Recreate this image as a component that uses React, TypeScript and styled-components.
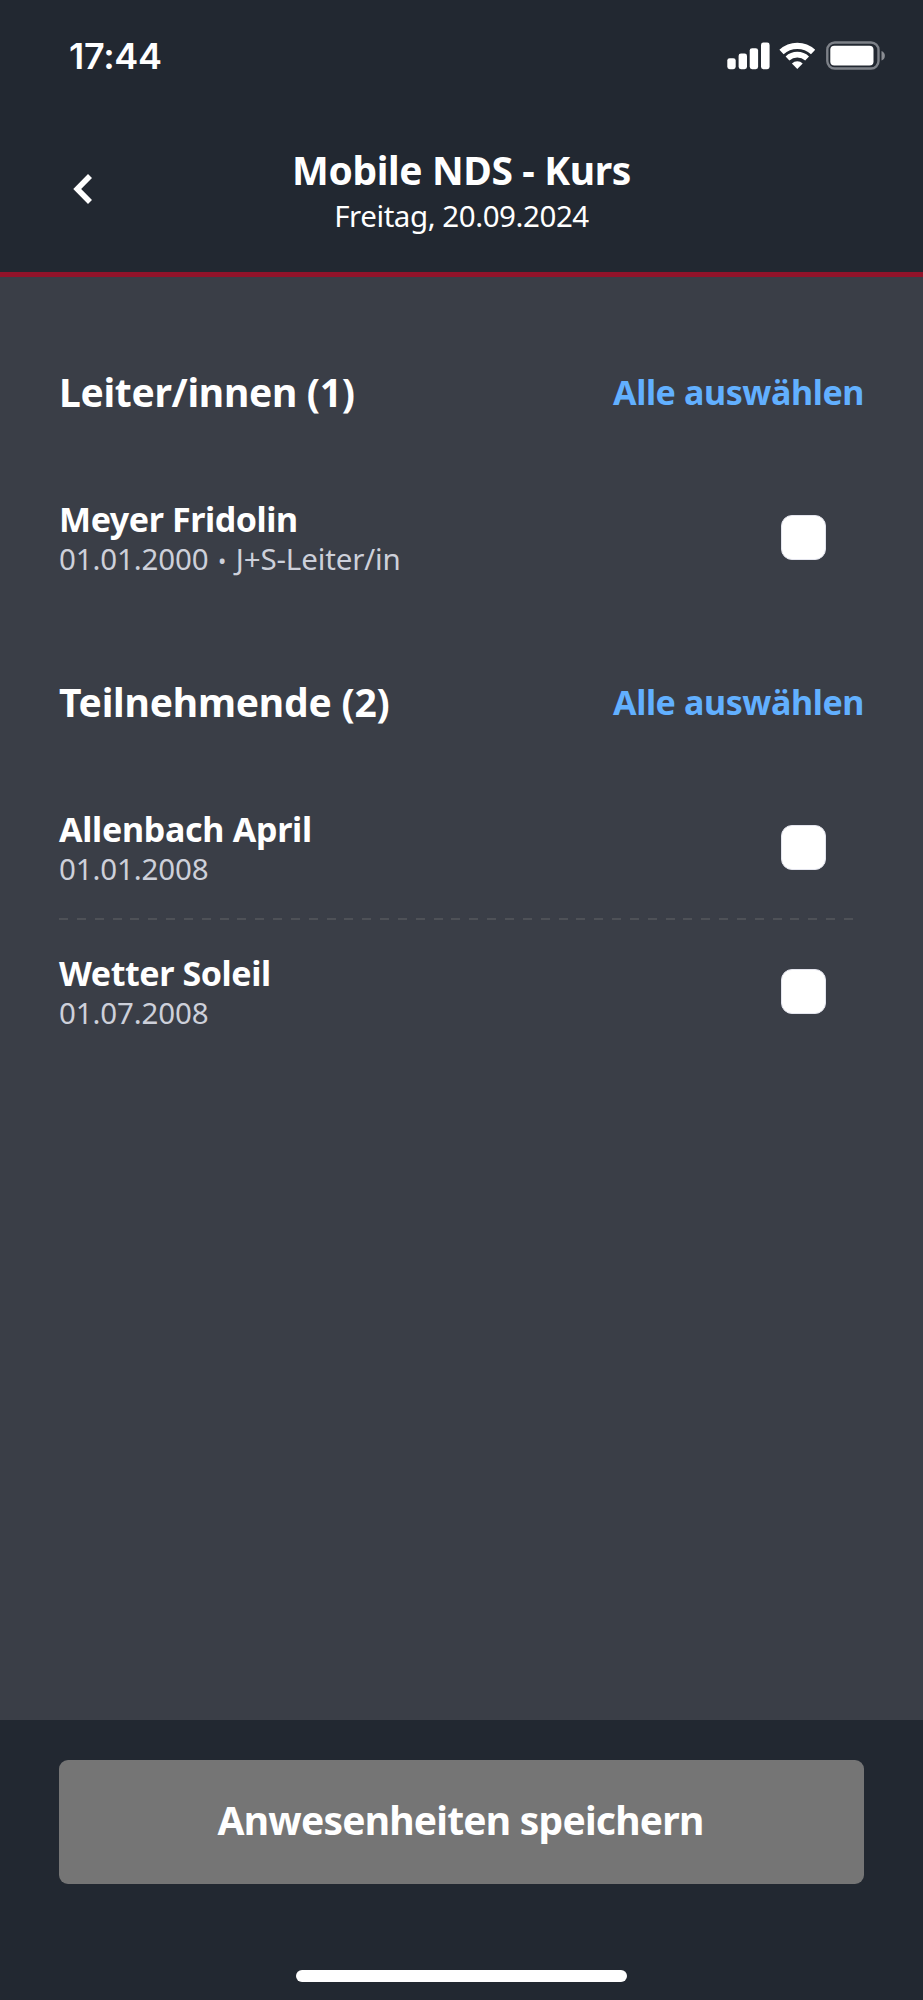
import React, { useState } from 'react';
import styled, { createGlobalStyle } from 'styled-components';

const GlobalStyle = createGlobalStyle`
  *, *::before, *::after { box-sizing: border-box; }
  body { margin: 0; background: #222831; }
  button { border: 0; padding: 0; margin: 0; background: none; font: inherit; color: inherit; cursor: pointer; }
  h1, h2, p, ul { margin: 0; padding: 0; }
  ul { list-style: none; }
`;

const Screen = styled.div`
  display: flex;
  flex-direction: column;
  width: 923px;
  height: 2000px;
  overflow: hidden;
  background: #3a3e47;
  color: #fff;
  font-family: 'Noto Sans', 'Open Sans', sans-serif;
  white-space: nowrap;
`;

const StatusBar = styled.div`
  display: flex;
  align-items: center;
  justify-content: space-between;
  height: 111px;
  padding: 0 37px 0 69px;
  background: #222831;
`;

const Clock = styled.span`
  font-family: Inter, sans-serif;
  font-size: 36px;
  font-weight: 600;
  line-height: 44px;
  letter-spacing: -0.3px;
`;

const StatusIcons = styled.div`
  display: flex;
  align-items: center;
  gap: 9px;

  svg { display: block; }
`;

const NavBar = styled.header`
  display: grid;
  grid-template-columns: 130px 1fr 130px;
  align-items: center;
  height: 166px;
  padding: 2px 0 6px;
  background: #222831;
  border-bottom: 5px solid #92132a;
`;

const BackButton = styled.button`
  justify-self: start;
  display: flex;
  margin: 0 0 2px 73px;
`;

const TitleBlock = styled.div`
  text-align: center;
`;

const Title = styled.h1`
  font-size: 39px;
  font-weight: 700;
  line-height: 50px;
  letter-spacing: -0.38px;
`;

const Subtitle = styled.p`
  margin-top: 2px;
  font-size: 29.5px;
  line-height: 38px;
  letter-spacing: -0.44px;
`;

const Content = styled.main`
  flex: 1;
  display: flex;
  flex-direction: column;
  gap: 66px;
  padding: 88.5px 60px 0 59px;
`;

const Section = styled.section`
  display: flex;
  flex-direction: column;
  gap: 48px;
`;

const SectionHeader = styled.div`
  display: flex;
  align-items: center;
  justify-content: space-between;
  height: 52px;
`;

const SectionTitle = styled.h2<{ $tracking: number }>`
  font-size: 39px;
  font-weight: 700;
  line-height: 52px;
  letter-spacing: ${({ $tracking }) => $tracking}px;
`;

const SelectAll = styled.button`
  margin-right: -1px;
  color: #62b0ff;
  font-size: 34px;
  font-weight: 700;
  line-height: 52px;
  letter-spacing: -0.4px;
`;

const Row = styled.li`
  display: flex;
  align-items: center;
  justify-content: space-between;
  height: 144px;
  padding-right: 37px;

  &:not(:last-child) {
    background: repeating-linear-gradient(90deg, #4e5157 0 9px, transparent 9px 17.84px) 0 100% / 795px 2px no-repeat;
  }
`;

const PersonInfo = styled.div`
  padding-top: 2px;
`;

const Name = styled.p<{ $tracking: number }>`
  font-size: 34px;
  font-weight: 700;
  line-height: 40px;
  letter-spacing: ${({ $tracking }) => $tracking}px;
`;

const Detail = styled.p`
  margin-top: 1px;
  color: #cdd0da;
  font-size: 29.5px;
  font-weight: 400;
  line-height: 38px;
  letter-spacing: -0.13px;
`;

const Dot = styled.span`
  margin: 0 2px;
  font-size: 22px;
  line-height: 1;
  vertical-align: 1px;
`;

const Checkbox = styled.button<{ $checked: boolean }>`
  width: 45px;
  height: 45px;
  border: 1px solid #e4e5ee;
  border-radius: 11px;
  background: ${({ $checked }) => ($checked ? '#62b0ff' : '#fff')};
`;

const Footer = styled.footer`
  display: flex;
  flex-direction: column;
  align-items: center;
  justify-content: space-between;
  height: 280px;
  padding: 40px 59px 18px;
  background: #222831;
`;

const SaveButton = styled.button`
  width: 100%;
  height: 124px;
  padding: 0 2px 5px 0;
  border-radius: 9px;
  background: #757575;
  font-size: 39px;
  font-weight: 700;
  letter-spacing: -0.78px;
`;

const HomeIndicator = styled.div`
  width: 331px;
  height: 12px;
  border-radius: 6px;
  background: #fff;
`;

type Person = { name: string; birthday: string; role?: string; tracking: number };

const groups: { title: string; tracking: number; people: Person[] }[] = [
  {
    title: 'Leiter/innen (1)',
    tracking: -0.3,
    people: [{ name: 'Meyer Fridolin', birthday: '01.01.2000', role: 'J+S-Leiter/in', tracking: -0.42 }],
  },
  {
    title: 'Teilnehmende (2)',
    tracking: -0.2,
    people: [
      { name: 'Allenbach April', birthday: '01.01.2008', tracking: -0.28 },
      { name: 'Wetter Soleil', birthday: '01.07.2008', tracking: -0.42 },
    ],
  },
];

function SignalIcon() {
  return (
    <svg width="43" height="28" viewBox="0 0 43 28" fill="#fff">
      <rect x="0.3" y="16.2" width="8.4" height="11" rx="2.4" />
      <rect x="11.6" y="11.6" width="8.4" height="15.6" rx="2.4" />
      <rect x="22.7" y="6.2" width="8.4" height="21" rx="2.4" />
      <rect x="34" y="0.5" width="8.6" height="26.7" rx="2.4" />
    </svg>
  );
}

function WifiIcon() {
  return (
    <svg width="38" height="28" viewBox="-18.3 -27 38 28" fill="none" stroke="#fff">
      <path d="M-15.8 -17A23.2 23.2 0 0 1 15.8 -17" strokeWidth="6.2" />
      <path d="M-9.8 -10.5A14.4 14.4 0 0 1 9.8 -10.5" strokeWidth="5.6" />
      <path d="M0 0L-5.4 -5.6A8 8 0 0 1 5.4 -5.6Z" fill="#fff" stroke="none" />
    </svg>
  );
}

function BatteryIcon() {
  return (
    <svg width="60" height="29" viewBox="0 0 60 29">
      <rect x="1.3" y="1.5" width="51.2" height="26" rx="7.5" fill="none" stroke="#7d8188" strokeWidth="2.4" />
      <rect x="4.3" y="4.8" width="43.2" height="19.6" rx="4" fill="#fff" />
      <path d="M55.5 10V19.6C60 18 60 11.6 55.5 10Z" fill="#8a8d93" />
    </svg>
  );
}

function ChevronIcon() {
  return (
    <svg width="20" height="30" viewBox="0 0 20 30" fill="none" stroke="#fff" strokeWidth="5.6">
      <path d="M17 2L4.2 15L17 28" />
    </svg>
  );
}

export default function App() {
  const [present, setPresent] = useState<string[]>([]);
  const toggle = (name: string) =>
    setPresent((p) => (p.includes(name) ? p.filter((n) => n !== name) : [...p, name]));
  const selectAll = (people: Person[]) =>
    setPresent((p) => Array.from(new Set([...p, ...people.map((x) => x.name)])));

  return (
    <>
      <GlobalStyle />
      <Screen>
        <StatusBar>
          <Clock>17:44</Clock>
          <StatusIcons>
            <SignalIcon />
            <WifiIcon />
            <BatteryIcon />
          </StatusIcons>
        </StatusBar>
        <NavBar>
          <BackButton aria-label="Zurück">
            <ChevronIcon />
          </BackButton>
          <TitleBlock>
            <Title>Mobile NDS - Kurs</Title>
            <Subtitle>Freitag, 20.09.2024</Subtitle>
          </TitleBlock>
        </NavBar>
        <Content>
          {groups.map((group) => (
            <Section key={group.title}>
              <SectionHeader>
                <SectionTitle $tracking={group.tracking}>{group.title}</SectionTitle>
                <SelectAll onClick={() => selectAll(group.people)}>Alle auswählen</SelectAll>
              </SectionHeader>
              <ul>
                {group.people.map((person) => (
                  <Row key={person.name}>
                    <PersonInfo>
                      <Name $tracking={person.tracking}>{person.name}</Name>
                      <Detail>
                        {person.birthday}
                        {person.role && (
                          <>
                            {' '}
                            <Dot>•</Dot> {person.role}
                          </>
                        )}
                      </Detail>
                    </PersonInfo>
                    <Checkbox
                      role="checkbox"
                      aria-checked={present.includes(person.name)}
                      aria-label={person.name}
                      $checked={present.includes(person.name)}
                      onClick={() => toggle(person.name)}
                    />
                  </Row>
                ))}
              </ul>
            </Section>
          ))}
        </Content>
        <Footer>
          <SaveButton>Anwesenheiten speichern</SaveButton>
          <HomeIndicator />
        </Footer>
      </Screen>
    </>
  );
}
